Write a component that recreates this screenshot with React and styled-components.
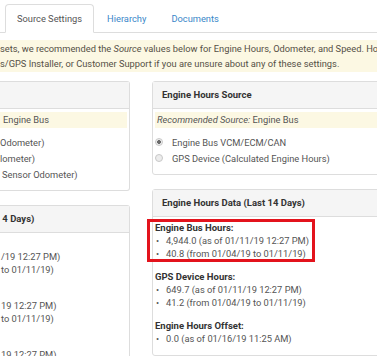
import React from "react";
import styled, { createGlobalStyle, css } from "styled-components";

const GlobalStyle = createGlobalStyle`
  html, body {
    margin: 0;
    padding: 0;
    background: #fff;
  }
  body {
    font-family: Roboto, "Liberation Sans", Arial, sans-serif;
    font-size: 9.3px;
    color: #555;
    overflow: hidden;
  }
`;

const Page = styled.div`
  width: 377px;
  height: 356px;
  overflow: hidden;
`;

const TabBar = styled.div`
  display: flex;
  gap: 1px;
  height: 28px;
  padding: 4px 0 0 5px;
  border-bottom: 1px solid #ddd;
`;

const Tab = styled.div`
  display: flex;
  align-items: center;
  height: 28px;
  padding: 0 11px;
  box-sizing: border-box;
  font-size: 9.3px;
  color: #3a87c9;
  border: 1px solid transparent;
  border-radius: 4px 4px 0 0;
  ${props =>
    props.$active &&
    css`
      color: #555;
      background: #fff;
      border-color: #ddd;
      border-bottom-color: #fff;
      height: 29px;
    `}
`;

const Alert = styled.div`
  margin-top: 7px;
  padding: 1px 0;
  background: #fcf8e3;
  color: #555046;
  line-height: 15px;
  white-space: nowrap;
  overflow: hidden;
`;

const Columns = styled.div`
  display: grid;
  grid-template-columns: 130px 228px;
  column-gap: 22px;
  margin-top: 9px;
`;

const Column = styled.div`
  display: flex;
  flex-direction: column;
  gap: 14px;
`;

const Panel = styled.div`
  border: 1px solid #ddd;
  border-radius: 3px;
  background: #fff;
  ${props =>
    props.$cut &&
    css`
      border-left: none;
      border-radius: 0 3px 3px 0;
    `}
`;

const PanelHeading = styled.div`
  height: 26px;
  line-height: 26px;
  padding-left: ${props => (props.$cut ? "0" : "9px")};
  background: #f5f5f5;
  border-bottom: 1px solid #ddd;
  font-weight: 700;
  font-size: 9.5px;
  color: #333;
  white-space: nowrap;
  overflow: hidden;
`;

const PanelBody = styled.div`
  padding: ${props => props.$pad || "3px 2px 8px"};
  padding-left: ${props => (props.$cut ? "0" : "2px")};
`;

const Recommend = styled.div`
  height: 16px;
  line-height: 16px;
  padding-left: ${props => (props.$cut ? "3px" : "2px")};
  margin-bottom: 6px;
  background: #fcf8e3;
  white-space: nowrap;
  overflow: hidden;

  em {
    font-style: italic;
  }
`;

const Option = styled.div`
  display: flex;
  align-items: center;
  gap: 9px;
  height: 16px;
  white-space: nowrap;
  padding-left: ${props => props.$indent || 0}px;
`;

const Radio = styled.span`
  flex: none;
  width: 8px;
  height: 8px;
  border-radius: 50%;
  border: 1px solid #c8c8c8;
  box-sizing: border-box;
  background: ${props =>
    props.$checked
      ? "radial-gradient(circle, #6b6b6b 0 1.6px, #eee 2.2px)"
      : "#ececec"};
`;

const Group = styled.div`
  width: fit-content;
  margin: 0 0 10px -6px;
  padding: 0 4px 0 6px;
  line-height: 13px;
  white-space: nowrap;
  ${props =>
    props.$marked &&
    css`
      outline: 3px solid #e3131c;
      outline-offset: -1px;
    `}
`;

const GroupTitle = styled.div`
  font-weight: 700;
  font-size: 9.5px;
  color: #333;
  min-height: 13px;
`;

const Line = styled.div`
  padding-left: ${props => props.$indent || 0}px;
  ${props =>
    !props.$plain &&
    css`
      &::before {
        content: "•";
        display: inline-block;
        width: 10px;
        padding-left: 1px;
      }
    `}
`;

const leftOptions = [
  { text: "Odometer)", indent: 0 },
  { text: "lometer)", indent: 0 },
  { text: "Sensor Odometer)", indent: 2 }
];

const hourOptions = [
  { label: "Engine Bus VCM/ECM/CAN", checked: true },
  { label: "GPS Device (Calculated Engine Hours)" }
];

const leftGroups = [
  ["/19 12:27 PM)", " to 01/11/19)"],
  ["19 12:27 PM)", " to 01/11/19)"],
  ["19 12:27 PM)"]
];

const hourGroups = [
  {
    title: "Engine Bus Hours:",
    lines: ["4,944.0 (as of 01/11/19 12:27 PM)", "40.8 (from 01/04/19 to 01/11/19)"],
    marked: true
  },
  {
    title: "GPS Device Hours:",
    lines: ["649.7 (as of 01/11/19 12:27 PM)", "41.2 (from 01/04/19 to 01/11/19)"]
  },
  {
    title: "Engine Hours Offset:",
    lines: ["0.0 (as of 01/16/19 11:25 AM)"]
  }
];

const App = () => {
  return (
    <Page>
      <GlobalStyle />
      <TabBar>
        <Tab $active>Source Settings</Tab>
        <Tab>Hierarchy</Tab>
        <Tab>Documents</Tab>
      </TabBar>

      <Alert>
        <div>
          sets, we recommended the <em>Source</em> values below for Engine Hours,
          Odometer, and Speed. How
        </div>
        <div>
          s/GPS Installer, or Customer Support if you are unsure about any of these
          settings.
        </div>
      </Alert>

      <Columns>
        <Column>
          <Panel $cut>
            <PanelHeading $cut>&nbsp;</PanelHeading>
            <PanelBody $cut>
              <Recommend $cut>Engine Bus</Recommend>
              {leftOptions.map((o, i) => (
                <Option key={i} $indent={o.indent}>
                  {o.text}
                </Option>
              ))}
            </PanelBody>
          </Panel>

          <Panel $cut>
            <PanelHeading $cut>&nbsp;4 Days)</PanelHeading>
            <PanelBody $cut $pad="4px 2px 0">
              {leftGroups.map((g, i) => (
                <Group key={i}>
                  <GroupTitle>&nbsp;</GroupTitle>
                  {g.map((l, j) => (
                    <Line key={j} $plain $indent={1}>
                      {l}
                    </Line>
                  ))}
                </Group>
              ))}
            </PanelBody>
          </Panel>
        </Column>

        <Column>
          <Panel>
            <PanelHeading>Engine Hours Source</PanelHeading>
            <PanelBody>
              <Recommend>
                <em>Recommended Source:</em> Engine Bus
              </Recommend>
              {hourOptions.map((o, i) => (
                <Option key={i}>
                  <Radio $checked={o.checked} />
                  {o.label}
                </Option>
              ))}
            </PanelBody>
          </Panel>

          <Panel>
            <PanelHeading>Engine Hours Data (Last 14 Days)</PanelHeading>
            <PanelBody $pad="4px 2px 0">
              {hourGroups.map((g, i) => (
                <Group key={i} $marked={g.marked}>
                  <GroupTitle>{g.title}</GroupTitle>
                  {g.lines.map((l, j) => (
                    <Line key={j}>{l}</Line>
                  ))}
                </Group>
              ))}
            </PanelBody>
          </Panel>
        </Column>
      </Columns>
    </Page>
  );
};

export default App;
